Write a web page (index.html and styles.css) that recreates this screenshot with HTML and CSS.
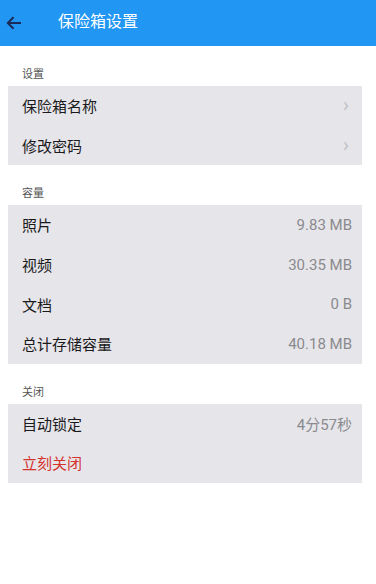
FILE: index.html
```html
<!DOCTYPE html>
<html lang="zh-CN">
<head>
  <meta charset="UTF-8" />
  <meta name="viewport" content="width=device-width, initial-scale=1.0"/>
  <title>保险箱设置</title>
  <link rel="stylesheet" href="styles.css">
</head>
<body>
  <div class="top-bar">
    <button class="back-btn" aria-label="返回">
      <svg width="16" height="14" viewBox="0 0 16 14">
        <path d="M15 7H2M7.5 1.2L1.8 7l5.7 5.8" fill="none" stroke="#1b2a57" stroke-width="2"/>
      </svg>
    </button>
    <h1>保险箱设置</h1>
  </div>

  <!-- 设置 -->
  <div class="section-label">设置</div>
  <div class="card">
    <div class="row"><span>保险箱名称</span><span class="chevron">&rsaquo;</span></div>
    <div class="row"><span>修改密码</span><span class="chevron">&rsaquo;</span></div>
  </div>

  <!-- 容量 -->
  <div class="section-label">容量</div>
  <div class="card">
    <div class="row"><span>照片</span><span class="value">9.83 MB</span></div>
    <div class="row"><span>视频</span><span class="value">30.35 MB</span></div>
    <div class="row"><span>文档</span><span class="value">0 B</span></div>
    <div class="row"><span>总计存储容量</span><span class="value">40.18 MB</span></div>
  </div>

  <!-- 关闭 -->
  <div class="section-label">关闭</div>
  <div class="card">
    <div class="row"><span>自动锁定</span><span class="value">4分57秒</span></div>
    <div class="row danger"><span>立刻关闭</span></div>
  </div>
</body>
</html>
```

FILE: styles.css
```css
:root {
  --primary: #2196f3;
  --card: #e6e5ea;
  --danger: #d5322c;
}

body {
  margin: 0;
  font-family: Roboto, "Noto Sans CJK SC", sans-serif;
  background: #fff;
  color: #1a1a1a;
}

.top-bar {
  height: 46px;
  background: var(--primary);
  display: flex;
  align-items: center;
}

.back-btn {
  background: none;
  border: none;
  padding: 0 0 0 6px;
  width: 58px;
  height: 100%;
  display: flex;
  align-items: center;
  cursor: pointer;
}

.top-bar h1 {
  margin: 0;
  font-size: 16px;
  font-weight: normal;
  color: #fff;
  padding-bottom: 6px;
}

.section-label {
  height: 40px;
  box-sizing: border-box;
  padding: 19px 0 0 22px;
  font-size: 11px;
  color: #555;
}

.card {
  margin: 0 14px 0 8px;
  background: var(--card);
}

.row {
  height: 39.6px;
  display: flex;
  align-items: center;
  justify-content: space-between;
  padding: 0 10px 0 14px;
  font-size: 15px;
}

.value {
  color: #8a8a8e;
  font-size: 15px;
}

.chevron {
  color: #c2c2c6;
  font-size: 21px;
  padding-right: 3px;
  line-height: 1;
}

.danger span {
  color: var(--danger);
}
```
